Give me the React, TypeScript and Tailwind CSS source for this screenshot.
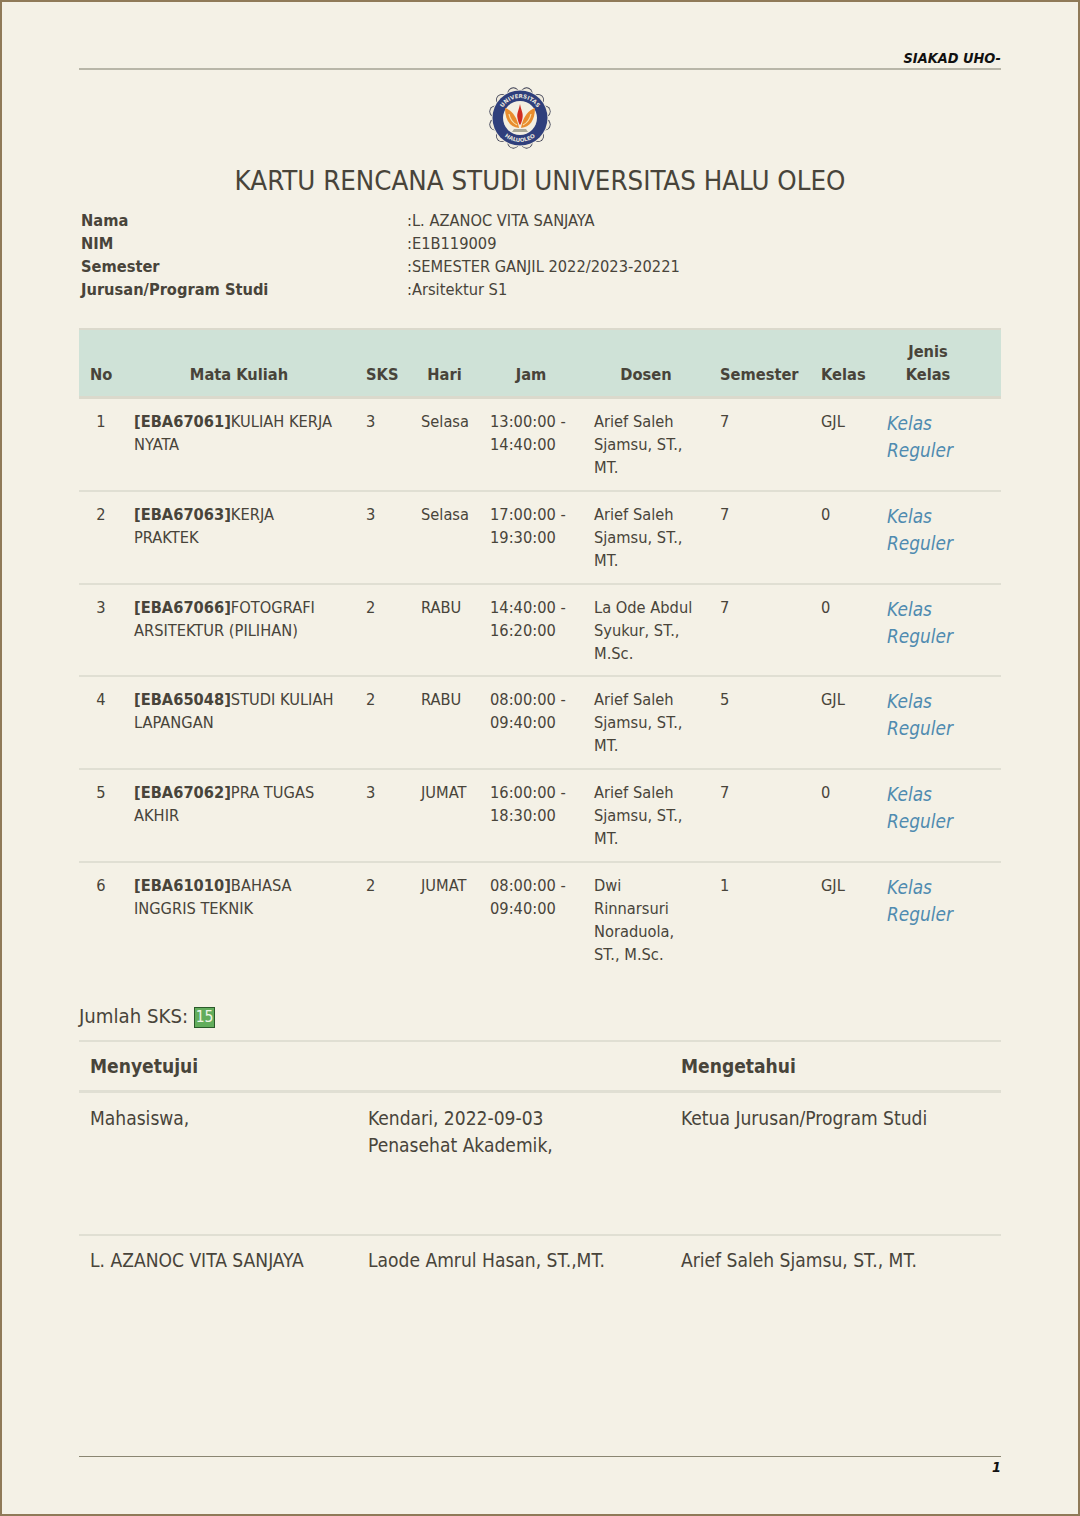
const rows = [
  { no: 1, code: "[EBA67061]", name: "KULIAH KERJA NYATA", sks: 3, hari: "Selasa", jam: "13:00:00 - 14:40:00", dosen: "Arief Saleh Sjamsu, ST., MT.", sem: 7, kelas: "GJL" },
  { no: 2, code: "[EBA67063]", name: "KERJA PRAKTEK", sks: 3, hari: "Selasa", jam: "17:00:00 - 19:30:00", dosen: "Arief Saleh Sjamsu, ST., MT.", sem: 7, kelas: "0" },
  { no: 3, code: "[EBA67066]", name: "FOTOGRAFI ARSITEKTUR (PILIHAN)", sks: 2, hari: "RABU", jam: "14:40:00 - 16:20:00", dosen: "La Ode Abdul Syukur, ST., M.Sc.", sem: 7, kelas: "0" },
  { no: 4, code: "[EBA65048]", name: "STUDI KULIAH LAPANGAN", sks: 2, hari: "RABU", jam: "08:00:00 - 09:40:00", dosen: "Arief Saleh Sjamsu, ST., MT.", sem: 5, kelas: "GJL" },
  { no: 5, code: "[EBA67062]", name: "PRA TUGAS AKHIR", sks: 3, hari: "JUMAT", jam: "16:00:00 - 18:30:00", dosen: "Arief Saleh Sjamsu, ST., MT.", sem: 7, kelas: "0" },
  { no: 6, code: "[EBA61010]", name: "BAHASA INGGRIS TEKNIK", sks: 2, hari: "JUMAT", jam: "08:00:00 - 09:40:00", dosen: "Dwi Rinnarsuri Noraduola, ST., M.Sc.", sem: 1, kelas: "GJL" },
];

const info = [
  ["Nama", ":L. AZANOC VITA SANJAYA"],
  ["NIM", ":E1B119009"],
  ["Semester", ":SEMESTER GANJIL 2022/2023-20221"],
  ["Jurusan/Program Studi", ":Arsitektur S1"],
];

// scallops round the edge of the seal
const lobes = Array.from({ length: 12 }, (_, i) => {
  const a = (i * Math.PI) / 6 + Math.PI / 12;
  return { x: 32 + 25.5 * Math.cos(a), y: 32 + 25.5 * Math.sin(a) };
});

function Logo() {
  return (
    <svg width="64" height="64" viewBox="0 0 64 64">
      <defs>
        <path id="arcTop" d="M12 32a20 20 0 0 1 40 0" />
        <path id="arcBottom" d="M8 32a24 24 0 0 0 48 0" />
      </defs>
      {lobes.map((l, i) => (
        <circle key={i} cx={l.x} cy={l.y} r="6" fill="#3a3d52" />
      ))}
      {lobes.map((l, i) => (
        <circle key={i} cx={l.x} cy={l.y} r="5.200" fill="#efeadc" />
      ))}
      <circle cx="32" cy="32" r="28.500" fill="#efeadc" />
      <circle cx="32" cy="32" r="27.500" fill="#2f3f7c" />
      <circle cx="32" cy="32" r="17" fill="#f3efe2" />
      <text fontSize="5.500" fontWeight="700" fill="#e9e6dc" fontFamily="'DejaVu Sans', sans-serif" textAnchor="middle">
        <textPath href="#arcTop" startOffset="50%">UNIVERSITAS</textPath>
      </text>
      <text fontSize="5.500" fontWeight="700" fill="#e9e6dc" fontFamily="'DejaVu Sans', sans-serif" textAnchor="middle">
        <textPath href="#arcBottom" startOffset="50%">HALUOLEO</textPath>
      </text>
      <path d="M31 42c-9-1-14-8-14-20 6 2 12 8 14 20z" fill="#e98d2e" />
      <path d="M33 42c9-1 14-8 14-20-6 2-12 8-14 20z" fill="#e98d2e" />
      <path d="M21 28c1 5 4 9 8 11M43 28c-1 5-4 9-8 11" stroke="#f7e0ac" strokeWidth="1.200" fill="none" />
      <path d="M32 18c1 6 3.500 9 2.500 14-.5 3-1.500 6-2.500 7-1-1-2-4-2.500-7-1-5 1.500-8 2.500-14z" fill="#cf2b20" />
      <path d="M26 43h12l2 3H24z" fill="#a9a898" />
    </svg>
  );
}

export default function App() {
  return (
    <div className="min-h-[1516px] border-2 border-[#8f7a58] bg-[#f4f1e6] px-[77px] pt-[48px] font-['DejaVu_Sans_Condensed','DejaVu_Sans',sans-serif] text-[#48443a]">
      <div className="flex h-[20px] justify-end border-b-2 border-[#b8b6a8] text-[14.400px] leading-[17px] font-bold text-[#111] italic">SIAKAD UHO-</div>
      <div className="mt-[16px] flex justify-center pr-[41px]">
        <Logo />
      </div>
      <h1 className="mt-[13px] text-center text-[27.400px] leading-[36px]">KARTU RENCANA STUDI UNIVERSITAS HALU OLEO</h1>
      <div className="mt-[10px] pl-[2px] text-[16.300px] leading-[23px]">
        {info.map(([label, value]) => (
          <div key={label} className="flex">
            <div className="w-[326px] font-bold">{label}</div>
            <div>{value}</div>
          </div>
        ))}
      </div>
      <table className="mt-[27px] w-[922px] table-fixed border-collapse text-[16.300px] leading-[23px]">
        <colgroup>
          <col className="w-[44px]" />
          <col className="w-[232px]" />
          <col className="w-[55px]" />
          <col className="w-[69px]" />
          <col className="w-[104px]" />
          <col className="w-[126px]" />
          <col className="w-[101px]" />
          <col className="w-[66px]" />
          <col className="w-[125px]" />
        </colgroup>
        <thead>
          <tr className="border-t-2 border-b-[3px] border-[#dbd9cc] bg-[#cfe2d7] align-bottom font-bold">
            <th className="px-[11px] pb-[10px]">No</th>
            <th className="px-[11px] pb-[10px]">Mata Kuliah</th>
            <th className="px-[11px] pb-[10px] text-left">SKS</th>
            <th className="px-[11px] pb-[10px]">Hari</th>
            <th className="px-[11px] pb-[10px]">Jam</th>
            <th className="px-[11px] pb-[10px]">Dosen</th>
            <th className="pb-[10px] pl-[11px] text-left">Semester</th>
            <th className="px-[11px] pb-[10px] text-left">Kelas</th>
            <th className="pt-[10px] pr-[21px] pb-[10px] pl-0">
              Jenis
              <br />
              Kelas
            </th>
          </tr>
        </thead>
        <tbody>
          {rows.map((r, i) => (
            <tr key={r.no} className={`align-top ${i < rows.length - 1 ? "border-b-2 border-[#e0dfd3]" : ""}`}>
              <td className="px-[11px] pt-[11px] pb-[10.750px] text-center">{r.no}</td>
              <td className="pt-[11px] pr-[14px] pb-[10.750px] pl-[11px]">
                <b>{r.code}</b>
                {r.name}
              </td>
              <td className="px-[11px] pt-[11px] pb-[10.750px]">{r.sks}</td>
              <td className="px-[11px] pt-[11px] pb-[10.750px]">{r.hari}</td>
              <td className="px-[11px] pt-[11px] pb-[10.750px]">{r.jam}</td>
              <td className="px-[11px] pt-[11px] pb-[10.750px]">{r.dosen}</td>
              <td className="px-[11px] pt-[11px] pb-[10.750px]">{r.sem}</td>
              <td className="px-[11px] pt-[11px] pb-[10.750px]">{r.kelas}</td>
              <td className="px-[11px] pt-[11px] pb-[10.750px] text-[18.900px] leading-[27px] text-[#4f8bb0] italic">Kelas Reguler</td>
            </tr>
          ))}
        </tbody>
      </table>
      <div className="mt-[25px] flex items-center text-[20.200px] leading-[28px]">
        Jumlah SKS:
        <span className="mt-[3px] ml-[6px] flex h-[21px] w-[21px] items-center justify-center border border-[#2a5a2a] bg-[#62ad5c] text-[15.500px] leading-[18px] text-[#eef5e6]">15</span>
      </div>
      <table className="mt-[10px] w-[922px] table-fixed border-collapse text-[19.070px] leading-[27px]">
        <colgroup>
          <col className="w-[278px]" />
          <col className="w-[313px]" />
          <col className="w-[331px]" />
        </colgroup>
        <thead>
          <tr className="border-t-2 border-b-[3px] border-[#e0dfd3] text-left font-bold">
            <th className="px-[11px] pt-[11px] pb-[10px]">Menyetujui</th>
            <th className="px-[11px] pt-[11px] pb-[10px]"></th>
            <th className="px-[11px] pt-[11px] pb-[10px]">Mengetahui</th>
          </tr>
        </thead>
        <tbody>
          <tr className="h-[144px] border-b-2 border-[#e0dfd3] align-top">
            <td className="px-[11px] pt-[12px]">Mahasiswa,</td>
            <td className="px-[11px] pt-[12px]">
              Kendari, 2022-09-03
              <br />
              Penasehat Akademik,
            </td>
            <td className="px-[11px] pt-[12px]">Ketua Jurusan/Program Studi</td>
          </tr>
          <tr>
            <td className="px-[11px] pt-[11px]">L. AZANOC VITA SANJAYA</td>
            <td className="px-[11px] pt-[11px]">Laode Amrul Hasan, ST.,MT.</td>
            <td className="px-[11px] pt-[11px]">Arief Saleh Sjamsu, ST., MT.</td>
          </tr>
        </tbody>
      </table>
      <div className="mt-[182px] border-t border-[#8a8672] pt-[1px] text-right text-[14.400px] leading-[18px] font-bold text-[#111] italic">1</div>
    </div>
  );
}
